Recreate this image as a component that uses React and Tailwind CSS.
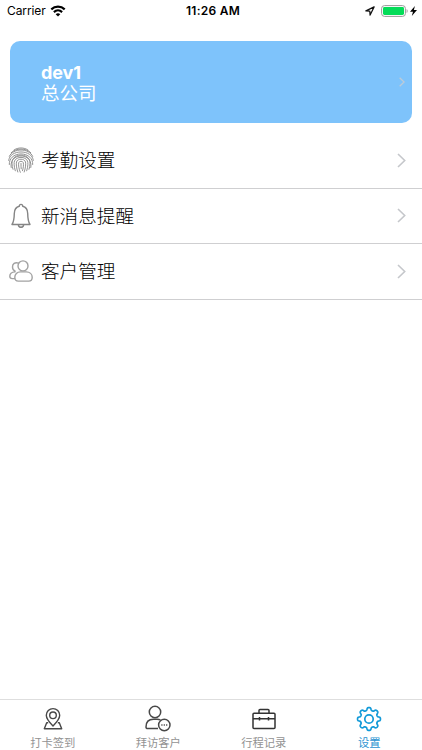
import React from 'react';

const gearPath = (() => {
  const points = [];
  for (let i = 0; i < 192; i++) {
    const a = (i / 192) * Math.PI * 2;
    const wave = Math.tanh(1.8 * Math.cos(8 * a)) / Math.tanh(1.8);
    const r = 10.1 + 1.35 * wave;
    points.push(`${(13 + r * Math.sin(a)).toFixed(2)} ${(13 - r * Math.cos(a)).toFixed(2)}`);
  }
  return `M${points.join('L')}Z`;
})();

function Wifi() {
  return (
    <svg width="16" height="12" viewBox="0 0 16 12" fill="none" stroke="#000" strokeWidth="2.200">
      <path d="M1.300 4.400C5.100.8 10.900.8 14.700 4.400" />
      <path d="M3.900 7.100c2.400-2.200 5.800-2.200 8.200 0" />
      <path d="M8 11.500 5.700 9.200c1.300-1.200 3.300-1.200 4.600 0z" fill="#000" stroke="none" />
    </svg>
  );
}

function StatusBar() {
  return (
    <header className="grid h-[22px] shrink-0 grid-cols-3 items-center text-[12px] text-black">
      <div className="flex items-center gap-[4px] pl-[7px]">
        <span className="tracking-[-0.1px]">Carrier</span>
        <Wifi />
      </div>
      <div className="pl-1 text-center font-semibold tracking-[0.25px]">11:26 AM</div>
      <div className="flex items-center justify-end pr-[5px]">
        <svg width="10" height="10" viewBox="0 0 10 10" fill="none" stroke="#111" strokeWidth="1.250" strokeLinejoin="round" className="mr-[6px]">
          <path d="M9.100.9.900 4.900l3.900.3.300 3.900z" />
        </svg>
        <svg width="28" height="12" viewBox="0 0 28 12" className="mr-[1px]">
          <rect x=".6" y=".6" width="23.800" height="10.800" rx="2.900" fill="#fff" stroke="#999" />
          <rect x="2" y="2" width="21" height="8" rx="1.400" fill="#04dc58" />
          <path d="M25.600 4v4c1.400-.5 1.400-3.500 0-4" fill="#999" />
        </svg>
        <svg width="7" height="10" viewBox="0 0 7 10">
          <path d="M4.900 0 0 5.700h3L1.800 10 7 4.100H3.900z" fill="#000" />
        </svg>
      </div>
    </header>
  );
}

function Chevron({ small = false }) {
  return (
    <svg width={small ? 6 : 9} height={small ? 10 : 15} viewBox="0 0 9 15" fill="none" stroke={small ? '#bdcbd8' : '#c5c7cb'} strokeWidth={small ? 2 : 1.6}>
      <path d="m1 1 6.700 6.500L1 14" />
    </svg>
  );
}

function Fingerprint() {
  return (
    <svg width="26" height="26" viewBox="0 0 26 26" fill="none" stroke="#8c8c8c" strokeWidth=".95" strokeLinecap="round">
      <path d="M6 3C10 .2 16 .2 20 3" />
      <path d="M3.200 5.700C8 .8 18 .8 22.800 5.700" />
      <path d="M1.300 9.300C5 .8 21 .8 24.700 9.300" />
      <path d="M.7 13.500C1.500 2 24.500 2 25.300 13.500" />
      <path d="M1.300 17.500C.5 3.300 25.500 3.300 24.700 17.500" />
      <path d="M3.200 20.500C.5 5 25.500 5 22.800 20.500" />
      <path d="M5 22.300C3.500 18 4 14.500 4.500 13c2.500-6.500 14.500-6.500 17 0 .5 1.500 1 5-.5 9.300" />
      <path d="M7.300 23.800C5.800 19 5.900 15.500 6.500 14c2-4.800 11-4.800 13 0 .6 1.500.7 5-.8 9.800" />
      <path d="M9.800 25c-1.500-4.300-1.700-8-1.300-10 1-3.700 8-3.700 9 0 .4 2 .2 5.700-1.300 10" />
      <path d="M12.300 25.300c-1.500-3.500-2-7-1.600-9.600.5-1.900 4.100-1.900 4.600 0 .4 2.600 0 5.500-.8 8" />
      <path d="M13 16.500c0 2 0 3.800.2 5.300" />
    </svg>
  );
}

function Bell() {
  return (
    <svg width="20" height="26" viewBox="0 0 20 26" fill="none" stroke="#858585" strokeWidth="1.400" strokeLinejoin="round">
      <path d="M8.300 3.300C8.300 .7 11.700 .7 11.700 3.300c3.300.8 4.900 3.200 5 7.200.1 6 .7 8.700 2.300 11H1c1.600-2.300 2.200-5 2.300-11 .1-4 1.700-6.400 5-7.200Z" />
      <path d="M7.300 22c.6 3 4.800 3 5.400 0" />
    </svg>
  );
}

function People() {
  return (
    <svg width="24" height="22" viewBox="0 0 24 22" fill="none" stroke="#a2a2a2" strokeWidth="1.400" strokeLinecap="round">
      <circle cx="14" cy="5.900" r="5" />
      <path d="M9.500 3.100C6 1.800 3.400 4 3.500 7c0 1.900 1 3.500 2.600 4.200M6.100 11.900C3 12.100.8 13.900.8 16.300c0 1.600.7 2.300 2.500 2.300h2.300" />
      <path d="M11.500 11.900h5.700c3.600 0 6 2.300 6 5.300 0 2.500-1 3.900-3.500 3.900H9.300c-2.400 0-3.500-1.400-3.500-3.900 0-3 2.200-5.300 5.700-5.300Z" />
    </svg>
  );
}

function PinIcon() {
  return (
    <svg width="26" height="26" viewBox="0 0 26 26" fill="none" stroke="#484848" strokeWidth="1.400" strokeLinejoin="round">
      <path d="M13 20C9.500 16.500 6.300 13 6.300 9.300a6.700 6.700 0 0 1 13.400 0C19.700 13 16.500 16.500 13 20Z" />
      <circle cx="13" cy="9.300" r="3.300" />
      <path d="M8.200 16.800H6.700L4.300 22.700h17.400l-2.400-5.900h-1.500" />
    </svg>
  );
}

function VisitIcon() {
  return (
    <svg width="28" height="28" viewBox="0 0 28 28" fill="none" stroke="#484848" strokeWidth="1.500" strokeLinejoin="round">
      <circle cx="11" cy="7" r="5.700" />
      <path d="M14 23.600H3.800C2.500 23.600 2 23.100 2 21.900c0-5 3-7.600 7.500-7.600h3.700c1.200 0 2.300.2 3.300.6" />
      <circle cx="20.300" cy="20" r="5.700" />
      <path d="M17.300 20h1.200m1.200 0h1.200m1.200 0h1.200" />
    </svg>
  );
}

function CaseIcon() {
  return (
    <svg width="26" height="26" viewBox="0 0 26 26" fill="none" stroke="#333" strokeWidth="1.500" strokeLinejoin="round">
      <rect x="2" y="7.200" width="22" height="15.300" rx="1" />
      <path d="M8 7V4.400q0-1 1-1h8q1 0 1 1V7M2 12.800h22M8.500 11v3.600m9-3.600v3.600" />
    </svg>
  );
}

function GearIcon() {
  return (
    <svg width="26" height="26" viewBox="0 0 26 26" fill="none" stroke="#129ad8" strokeWidth="1.700" strokeLinejoin="round">
      <path d={gearPath} />
      <circle cx="13" cy="13" r="4.200" />
    </svg>
  );
}

const rows = [
  { label: '考勤设置', Icon: Fingerprint },
  { label: '新消息提醒', Icon: Bell },
  { label: '客户管理', Icon: People },
];

const tabs = [
  { label: '打卡签到', Icon: PinIcon },
  { label: '拜访客户', Icon: VisitIcon },
  { label: '行程记录', Icon: CaseIcon },
  { label: '设置', Icon: GearIcon, active: true },
];

export default function App() {
  return (
    <div className="flex h-[750px] w-[422px] flex-col overflow-hidden bg-white font-[Inter,'Noto_Sans_CJK_SC',sans-serif]">
      <StatusBar />
      <main className="flex-1 pt-[19px]">
        <section className="mx-[10px] flex h-[82px] items-center justify-between rounded-[10px] bg-[#7ec3fb] pr-[7px] pl-[31px] text-white">
          <div className="pt-[2px] text-[18.500px] leading-[21px]">
            <div className="text-[18px] font-bold tracking-[-0.1px]">dev1</div>
            <div>总公司</div>
          </div>
          <Chevron small />
        </section>
        <ul className="mt-[10px]">
          {rows.map(({ label, Icon }) => (
            <li key={label} className="flex h-[55.500px] items-center border-b border-[#cfcfd1] pr-[16px] pl-[7px]">
              <span className="flex w-[27px] justify-center"><Icon /></span>
              <span className="ml-[7px] flex-1 text-[18.600px] leading-[26px] font-light text-black">{label}</span>
              <Chevron />
            </li>
          ))}
        </ul>
      </main>
      <nav className="grid h-[51px] shrink-0 grid-cols-4 border-t border-[#dedede]">
        {tabs.map(({ label, Icon, active }) => (
          <div key={label} className="flex flex-col items-center pt-[5px]">
            <span className="flex h-[28px] items-center"><Icon /></span>
            <span className={`mt-[2px] text-[11.300px] leading-[16px] ${active ? 'text-[#2b93d1]' : 'text-[#929292]'}`}>{label}</span>
          </div>
        ))}
      </nav>
    </div>
  );
}
